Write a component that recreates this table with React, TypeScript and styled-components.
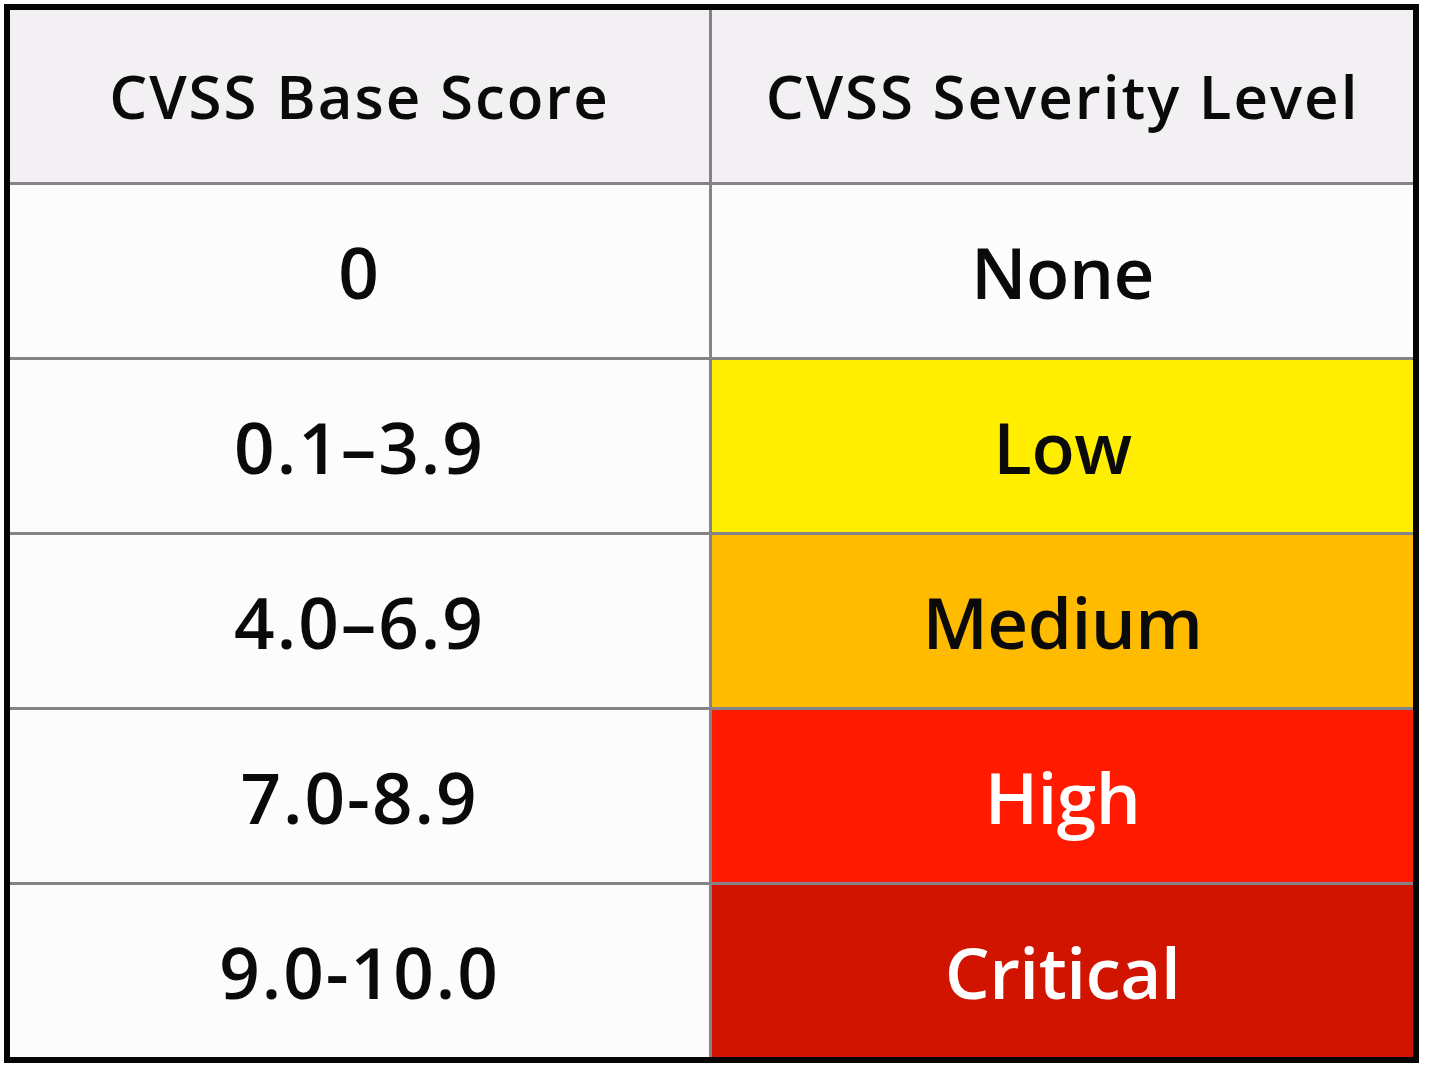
import React from 'react';
import styled, { createGlobalStyle } from 'styled-components';

const GlobalStyle = createGlobalStyle`
  body {
    margin: 0;
    background: #ffffff;
    font-family: "Open Sans", "DejaVu Sans", sans-serif;
  }
`;

const Page = styled.div`
  padding: 4px;
`;

const Table = styled.div`
  display: grid;
  grid-template-columns: 699px 701px;
  grid-template-rows: repeat(6, 172px);
  gap: 3px;
  width: 1403px;
  background: #858387;
  border: 6px solid #050505;
`;

const HeaderCell = styled.div`
  display: flex;
  align-items: center;
  justify-content: center;
  background: #f2f0f3;
  color: #0a0a0a;
  font-size: 60px;
  font-weight: 600;
  letter-spacing: 2px;
`;

const Cell = styled.div<{ $bg?: string; $fg?: string; $spacing?: number }>`
  display: flex;
  align-items: center;
  justify-content: center;
  background: ${(p) => p.$bg || '#fdfcfd'};
  color: ${(p) => p.$fg || '#0a0a0a'};
  font-size: 71px;
  font-weight: 600;
  letter-spacing: ${(p) => p.$spacing ?? 0}px;
`;

const rows = [
  { score: '0', level: 'None', bg: '#fdfcfd', fg: '#0a0a0a' },
  { score: '0.1–3.9', level: 'Low', bg: '#ffee00', fg: '#0a0a0a' },
  { score: '4.0–6.9', level: 'Medium', bg: '#ffbb00', fg: '#0a0a0a' },
  { score: '7.0-8.9', level: 'High', bg: '#ff1a00', fg: '#ffffff' },
  { score: '9.0-10.0', level: 'Critical', bg: '#d01400', fg: '#ffffff' },
];

const App: React.FC = () => {
  return (
    <Page>
      <GlobalStyle />
      <Table>
        <HeaderCell>CVSS Base Score</HeaderCell>
        <HeaderCell>CVSS Severity Level</HeaderCell>
        {rows.map((r) => (
          <React.Fragment key={r.level}>
            <Cell $spacing={2}>{r.score}</Cell>
            <Cell $bg={r.bg} $fg={r.fg} $spacing={-0.5}>
              {r.level}
            </Cell>
          </React.Fragment>
        ))}
      </Table>
    </Page>
  );
};

export default App;
